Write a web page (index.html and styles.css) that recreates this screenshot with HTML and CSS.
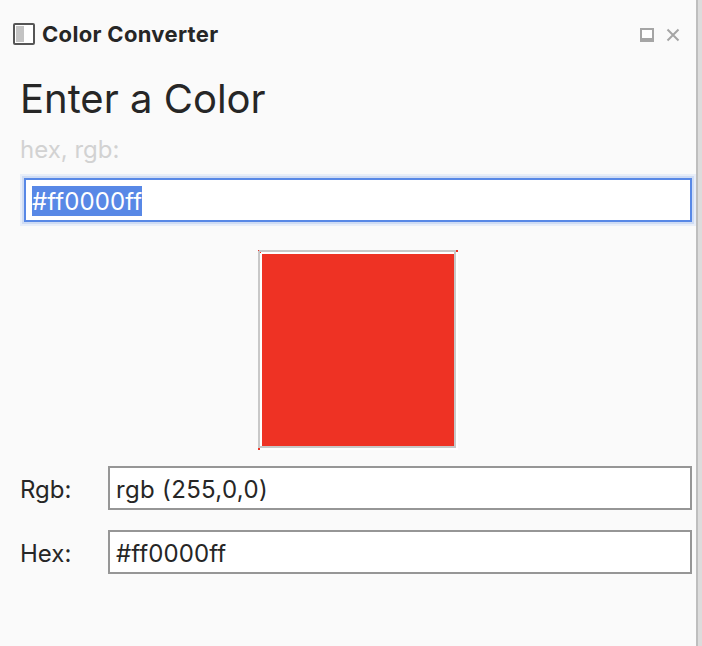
FILE: index.html
```html
<!DOCTYPE html>
<html lang="en">
<head>
<meta charset="utf-8">
<title>Color Converter</title>
<link rel="stylesheet" href="styles.css">
</head>
<body>
<main class="view">
  <header class="tab">
    <svg class="tab-icon" width="22" height="22" viewBox="0 0 22 22"><rect x="1" y="1" width="20" height="20" rx="1" fill="#fff" stroke="#555" stroke-width="2"/><path fill="#c4c4c4" d="M3 3h8v16H3z"/></svg>
    <span class="tab-title">Color Converter</span>
    <svg class="tab-tools" width="40" height="14" viewBox="0 0 40 14" fill="none" stroke="#a5a5a5"><path fill="#fff" stroke="none" d="M1 1h12v10H1z"/><path stroke-width="2" d="M1 12V1h12v11"/><path stroke-width="4" d="M0 12h14"/><path stroke-width="2" d="M27.5 1.5l11 11M38.5 1.5l-11 11"/></svg>
  </header>
  <h1 class="heading">Enter a Color</h1>
  <p class="hint">hex, rgb:</p>
  <div class="field field-active"><span class="selection">#ff0000ff</span></div>
  <svg class="swatch" width="200" height="200" viewBox="0 0 200 200" shape-rendering="crispEdges">
    <path fill="#fff" d="M2 2h198v198H2z"/>
    <path fill="#c8c8c8" d="M0 0h198v198H0z"/>
    <path fill="#fff" d="M2 2h194v194H2z"/>
    <path fill="#ee3224" d="M4 4h192v192H4zM0 0h1v1H0zM2 2h1v1H2zM198 0h2v2h-2zM0 198h2v2H0z"/>
  </svg>
  <div class="row"><span class="label">Rgb:</span><div class="field"><span class="value value-rgb">rgb (255,0,0)</span></div></div>
  <div class="row"><span class="label">Hex:</span><div class="field"><span class="value">#ff0000ff</span></div></div>
</main>
</body>
</html>
```
FILE: styles.css
```css
* { box-sizing: border-box; }
body {
  margin: 0;
  width: 702px;
  height: 646px;
  overflow: hidden;
  background: #dcdcdc;
  font: 24px/30px Inter, sans-serif;
  color: #262626;
}
.view {
  display: flex;
  flex-direction: column;
  width: 698px;
  height: 646px;
  padding-right: 4px;
  background: #fafafa;
  border-right: 2px solid #bebebe;
}
.tab {
  display: flex;
  align-items: center;
  height: 68px;
  padding: 0 12px 0 13px;
}
.tab-icon { margin-right: 7px; }
.tab-title {
  font-size: 22px;
  font-weight: 700;
  letter-spacing: 0.32px;
}
.tab-tools { margin: 2px 0 0 auto; }
.heading {
  margin: 7px 0 0 20px;
  font-size: 40px;
  line-height: 48px;
  font-weight: 400;
}
.hint { margin: 12px 0 13px 20px; color: #d2d2d2; }
.field {
  flex: 1;
  height: 44px;
  padding: 6px;
  background: #fff;
  border: 2px solid #969696;
}
.field-active {
  flex: none;
  margin-left: 24px;
  border-color: #5888e6;
  box-shadow: 0 0 0 2px #cfdcf4, 0 0 0 4px #e8eef9;
}
.selection {
  display: block;
  width: 110px;
  height: 30px;
  padding-top: 1px;
  background: #5888e6;
  color: #fff;
  letter-spacing: 0.1px;
}
.swatch { margin: 28px 0 16px 258px; }
.row {
  display: flex;
  align-items: center;
  height: 44px;
  margin-bottom: 20px;
}
.label { width: 88px; margin-left: 20px; padding-top: 3px; }
.value { display: block; padding-top: 1px; letter-spacing: 0.1px; }
.value-rgb { letter-spacing: 0.33px; }
```
